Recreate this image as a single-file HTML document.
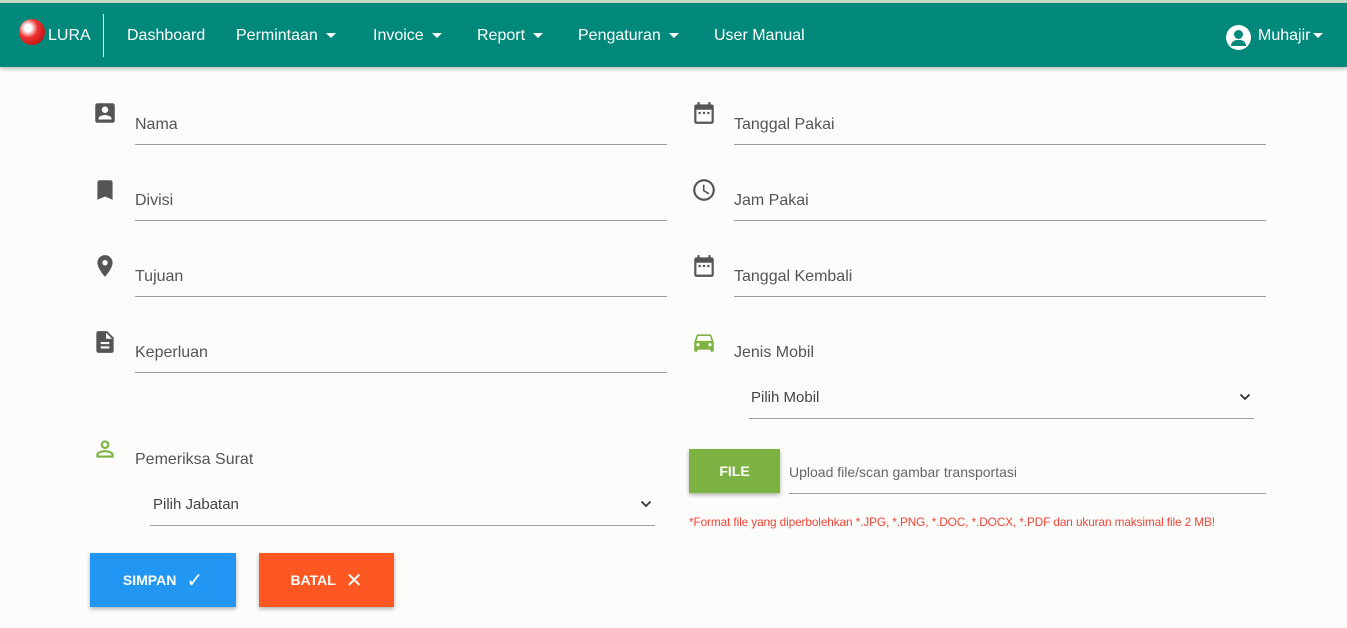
<!DOCTYPE html>
<html><head><style>
*{box-sizing:border-box;margin:0;padding:0}
body{width:1347px;height:628px;overflow:hidden;background:#fcfcfa;font-family:"Liberation Sans",sans-serif;position:relative}
.nav{position:absolute;left:0;top:0;width:1347px;height:67px;background:#00897b;border-top:3px solid #c8d8c8;box-shadow:0 2px 4px rgba(0,0,0,.25);color:#fff}
.nav span{position:absolute;top:24px;font-size:16px}
.car{display:inline-block;border-left:5px solid transparent;border-right:5px solid transparent;border-top:5px solid #fff;margin-left:8px;vertical-align:middle}
.lbl{position:absolute;font-size:16px;color:#555}
.line{position:absolute;height:1px;background:#9e9e9e}
.ic{position:absolute;width:26px;height:26px}
.sel{position:absolute;font-size:15px;color:#444}
.chev{position:absolute;width:12px;height:8px}
.btn{position:absolute;color:#fff;font-weight:bold;font-size:14px;box-shadow:0 2px 4px rgba(0,0,0,.3);display:flex;align-items:center;justify-content:center;gap:10px}
</style></head><body>
<div class="nav">
<div style="position:absolute;left:19px;top:16px;width:26px;height:26px;border-radius:50%;background:radial-gradient(circle at 35% 35%,#fff 0 15%,#e33 40%,#a00 100%)"></div>
<span style="left:48px">LURA</span>
<div style="position:absolute;left:103px;top:11px;width:1px;height:43px;background:#fff"></div>
<span style="left:127px">Dashboard</span>
<span style="left:236px">Permintaan<i class="car"></i></span>
<span style="left:373px">Invoice<i class="car"></i></span>
<span style="left:477px">Report<i class="car"></i></span>
<span style="left:578px">Pengaturan<i class="car"></i></span>
<span style="left:714px">User Manual</span>
<div style="position:absolute;left:1226px;top:22px;width:25px;height:25px;border-radius:50%;background:#fff"><div style="position:absolute;left:8px;top:5px;width:9px;height:9px;border-radius:50%;background:#00897b"></div><div style="position:absolute;left:5px;top:15px;width:15px;height:6px;border-radius:7px 7px 0 0;background:#00897b"></div></div>
<span style="left:1258px">Muhajir<i class="car" style="margin-left:3px"></i></span>
</div>

<svg class="ic" style="left:92px;top:100px" viewBox="0 0 24 24"><path fill="#555" d="M3 5v14a2 2 0 002 2h14a2 2 0 002-2V5a2 2 0 00-2-2H5a2 2 0 00-2 2zm12 4a3 3 0 11-6 0 3 3 0 016 0zm-9 8c0-2 4-3.1 6-3.1s6 1.1 6 3.1v1H6v-1z"/></svg>
<div class="lbl" style="left:135px;top:116px">Nama</div><div class="line" style="left:135px;top:144px;width:532px"></div>
<svg class="ic" style="left:92px;top:177px" viewBox="0 0 24 24"><path fill="#555" d="M17 3H7a2 2 0 00-2 2v16l7-3 7 3V5a2 2 0 00-2-2z"/></svg>
<div class="lbl" style="left:135px;top:192px">Divisi</div><div class="line" style="left:135px;top:220px;width:532px"></div>
<svg class="ic" style="left:92px;top:253px" viewBox="0 0 24 24"><path fill="#555" d="M12 2a7 7 0 00-7 7c0 5.25 7 13 7 13s7-7.750 7-13a7 7 0 00-7-7zm0 9.5a2.5 2.5 0 110-5 2.5 2.5 0 010 5z"/></svg>
<div class="lbl" style="left:135px;top:268px">Tujuan</div><div class="line" style="left:135px;top:296px;width:532px"></div>
<svg class="ic" style="left:92px;top:329px" viewBox="0 0 24 24"><path fill="#555" d="M14 2H6a2 2 0 00-2 2v16a2 2 0 002 2h12a2 2 0 002-2V8l-6-6zm2 16H8v-2h8v2zm0-4H8v-2h8v2zm-3-5V3.5L18.5 9H13z"/></svg>
<div class="lbl" style="left:135px;top:344px">Keperluan</div><div class="line" style="left:135px;top:372px;width:532px"></div>
<svg class="ic" style="left:92px;top:436px" viewBox="0 0 24 24"><path fill="#7cb342" d="M12 6a2 2 0 110 4 2 2 0 010-4m0 9c2.7 0 5.8 1.29 6 2v1H6v-.99c.2-.72 3.3-2.01 6-2.01M12 4a4 4 0 100 8 4 4 0 000-8zm0 9c-2.67 0-8 1.34-8 4v3h16v-3c0-2.66-5.33-4-8-4z"/></svg>
<div class="lbl" style="left:135px;top:451px">Pemeriksa Surat</div>
<div class="sel" style="left:153px;top:496px">Pilih Jabatan</div>
<svg class="chev" style="left:640px;top:500px" viewBox="0 0 12 8"><path d="M1.5 1.5L6 6l4.5-4.5" fill="none" stroke="#333" stroke-width="1.8"/></svg>
<div class="line" style="left:150px;top:525px;width:505px"></div>
<div class="btn" style="left:90px;top:553px;width:146px;height:54px;background:#2196f3">SIMPAN <span style="font-size:20px;font-weight:normal">✓</span></div>
<div class="btn" style="left:259px;top:553px;width:135px;height:54px;background:#ff5722">BATAL <span style="font-size:20px;font-weight:normal">✕</span></div>

<svg class="ic" style="left:691px;top:100px" viewBox="0 0 24 24"><path fill="#555" d="M19 4h-1V2h-2v2H8V2H6v2H5a2 2 0 00-2 2v14a2 2 0 002 2h14a2 2 0 002-2V6a2 2 0 00-2-2zm0 16H5V9h14v11zM7 11h2v2H7zm4 0h2v2h-2zm4 0h2v2h-2z"/></svg>
<div class="lbl" style="left:734px;top:116px">Tanggal Pakai</div><div class="line" style="left:734px;top:144px;width:532px"></div>
<svg class="ic" style="left:691px;top:177px" viewBox="0 0 24 24"><path fill="#555" d="M12 2a10 10 0 100 20 10 10 0 000-20zm0 18a8 8 0 110-16 8 8 0 010 16zm.5-13H11v6l5.25 3.15.75-1.23-4.5-2.67z"/></svg>
<div class="lbl" style="left:734px;top:192px">Jam Pakai</div><div class="line" style="left:734px;top:220px;width:532px"></div>
<svg class="ic" style="left:691px;top:253px" viewBox="0 0 24 24"><path fill="#555" d="M19 4h-1V2h-2v2H8V2H6v2H5a2 2 0 00-2 2v14a2 2 0 002 2h14a2 2 0 002-2V6a2 2 0 00-2-2zm0 16H5V9h14v11zM7 11h2v2H7zm4 0h2v2h-2zm4 0h2v2h-2z"/></svg>
<div class="lbl" style="left:734px;top:268px">Tanggal Kembali</div><div class="line" style="left:734px;top:296px;width:532px"></div>
<svg class="ic" style="left:691px;top:329px" viewBox="0 0 24 24"><path fill="#7cb342" d="M18.9 6c-.2-.6-.8-1-1.4-1h-11c-.7 0-1.2.4-1.4 1L3 12v8c0 .6.4 1 1 1h1c.6 0 1-.4 1-1v-1h12v1c0 .6.4 1 1 1h1c.6 0 1-.4 1-1v-8l-2.1-6zM6.5 16a1.5 1.5 0 110-3 1.5 1.5 0 010 3zm11 0a1.5 1.5 0 110-3 1.5 1.5 0 010 3zM5 11l1.5-4.5h11L19 11H5z"/></svg>
<div class="lbl" style="left:734px;top:344px">Jenis Mobil</div>
<div class="sel" style="left:751px;top:389px">Pilih Mobil</div>
<svg class="chev" style="left:1239px;top:393px" viewBox="0 0 12 8"><path d="M1.5 1.5L6 6l4.5-4.5" fill="none" stroke="#333" stroke-width="1.8"/></svg>
<div class="line" style="left:749px;top:418px;width:505px"></div>
<div class="btn" style="left:689px;top:449px;width:91px;height:44px;background:#7cb342">FILE</div>
<div class="sel" style="left:789px;top:464px;font-size:14px;color:#666">Upload file/scan gambar transportasi</div>
<div class="line" style="left:789px;top:493px;width:477px"></div>
<div style="position:absolute;left:689px;top:515px;font-size:11.8px;color:#f44336;letter-spacing:-0.1px">*Format file yang diperbolehkan *.JPG, *.PNG, *.DOC, *.DOCX, *.PDF dan ukuran maksimal file 2 MB!</div>
</body></html>
